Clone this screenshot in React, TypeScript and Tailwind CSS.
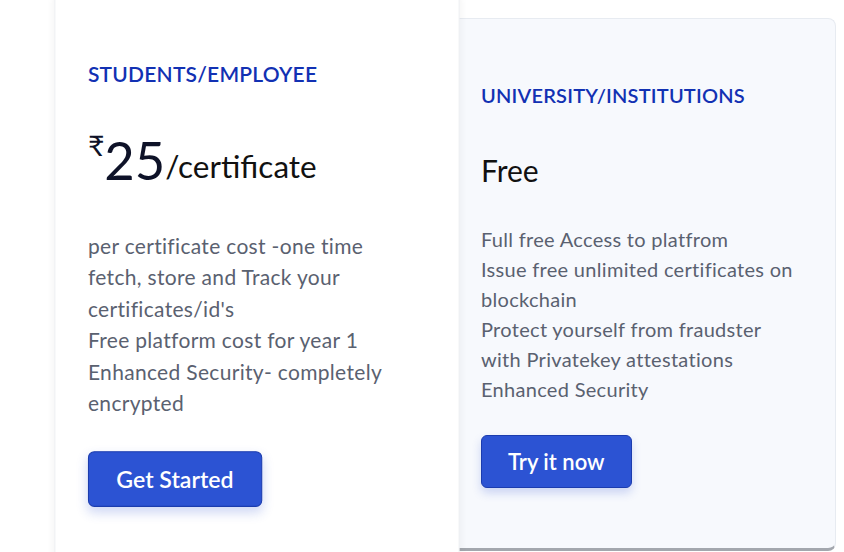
import React from 'react';

const font = { fontFamily: 'Lato, "DejaVu Sans", sans-serif' };

type Plan = {
  title: string;
  lines: React.ReactNode[];
  cta: string;
};

const students: Plan = {
  title: 'STUDENTS/EMPLOYEE',
  lines: [
    <>per certificate cost -one time<br />fetch, store and Track your<br />certificates/id's</>,
    <>Free platform cost for year 1</>,
    <>Enhanced Security- completely<br />encrypted</>,
  ],
  cta: 'Get Started',
};

const institutions: Plan = {
  title: 'UNIVERSITY/INSTITUTIONS',
  lines: [
    <>Full free Access to platfrom</>,
    <>Issue free unlimited certificates on<br />blockchain</>,
    <>Protect yourself from fraudster<br />with Privatekey attestations</>,
    <>Enhanced Security</>,
  ],
  cta: 'Try it now',
};

function Features({ lines }: { lines: React.ReactNode[] }) {
  return (
    <ul className="text-[20px] leading-[30px] tracking-[0.3px] text-[#5a6170] whitespace-nowrap">
      {lines.map((line, i) => (
        <li key={i}>{line}</li>
      ))}
    </ul>
  );
}

function CtaButton({ label }: { label: string }) {
  return (
    <button className="h-[53px] rounded-md border border-[#1b3cae] bg-[#2c53d3] px-[26px] text-[22px] font-semibold text-white shadow-[0_5px_10px_rgba(44,83,211,0.22)]">
      {label}
    </button>
  );
}

export default function App() {
  return (
    <div className="h-[552px] w-[844px] overflow-hidden bg-white" style={font}>
      <div className="flex items-start pl-[64px] pt-[18px]">
        {/* hovered card: lifted and scaled */}
        <div className="relative z-10 flex h-[545px] w-[386px] -translate-y-3 scale-105 flex-col rounded-lg border border-[#eef0f3] bg-white px-[31px] pt-[62px] shadow-[0_0_8px_rgba(0,0,0,0.06)]">
          <h3 className="text-[20px] font-semibold leading-7 tracking-[0.2px] text-[#1231b3]">
            {students.title}
          </h3>
          <div className="mt-[39px] flex h-[50px] items-end leading-none text-[#0e1228]">
            <span className="mt-[2px] self-start text-[27px]">₹</span>
            <span className="text-[50px] leading-[40px]">25</span>
            <span className="text-[30px] text-[#111]">/certificate</span>
          </div>
          <div className="mt-[46px]">
            <Features lines={students.lines} />
          </div>
          <div className="mt-[31px]">
            <CtaButton label={students.cta} />
          </div>
        </div>

        <div className="flex h-[533px] w-[386px] flex-col rounded-lg border border-[#e7ebf1] border-b-[3px] border-b-[#a3a7ae] bg-[#f7f9fd] px-[30px] pt-[62px]">
          <h3 className="text-[20px] font-semibold leading-7 tracking-[0.2px] text-[#1231b3]">
            {institutions.title}
          </h3>
          <div className="mt-[43px] text-[30px] leading-9 text-[#111]">Free</div>
          <div className="mt-[36px]">
            <Features lines={institutions.lines} />
          </div>
          <div className="mt-[31px]">
            <CtaButton label={institutions.cta} />
          </div>
        </div>
      </div>
    </div>
  );
}
